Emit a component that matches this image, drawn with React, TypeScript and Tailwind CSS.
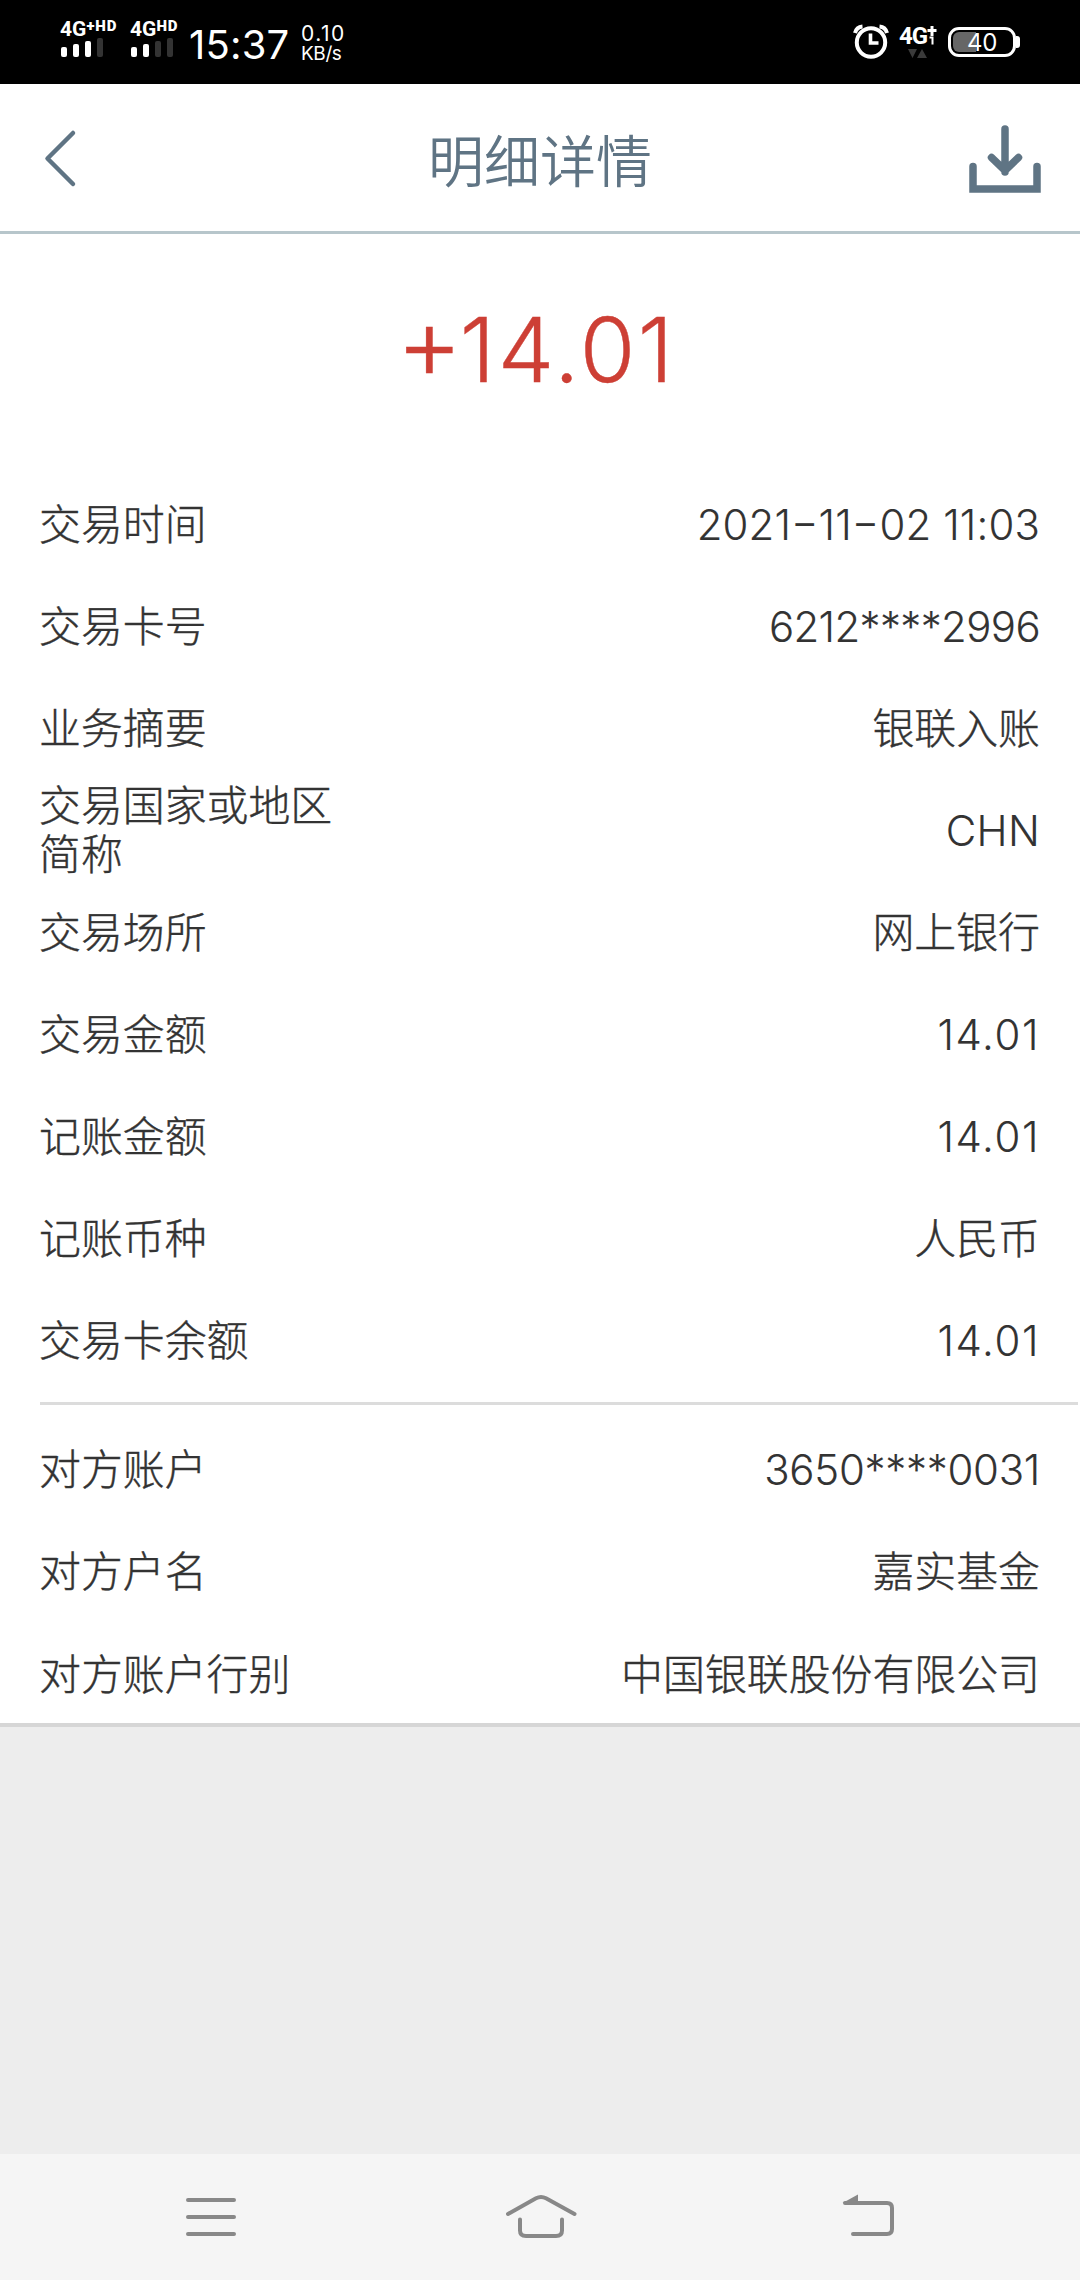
type Row = [string, string, string?];

const transaction: Row[] = [
  ['交易时间', '2021−11−02 11:03', 'tracking-[0.15px]'],
  ['交易卡号', '6212****2996', 'tracking-[-0.6px]'],
  ['业务摘要', '银联入账'],
  ['交易国家或地区简称', 'CHN', 'tracking-[0.3px]'],
  ['交易场所', '网上银行'],
  ['交易金额', '14.01', 'tracking-[1.6px]'],
  ['记账金额', '14.01', 'tracking-[1.6px]'],
  ['记账币种', '人民币'],
  ['交易卡余额', '14.01', 'tracking-[1.6px]'],
];

const counterparty: Row[] = [
  ['对方账户', '3650****0031', 'tracking-[-0.25px]'],
  ['对方户名', '嘉实基金'],
  ['对方账户行别', '中国银联股份有限公司'],
];

function Value({ text }: { text: string }) {
  return (
    <>
      {text.split(/(−)/).map((part, i) =>
        part === '−' ? (
          <span key={i} className="[font-feature-settings:'case']">
            {part}
          </span>
        ) : (
          part
        ),
      )}
    </>
  );
}

function Rows({ rows }: { rows: Row[] }) {
  return (
    <>
      {rows.map(([label, value, tracking]) => (
        <div
          key={label}
          className="flex h-[102.1px] items-center justify-between pr-[40px] pl-[39px] text-[41.9px] leading-[49px] font-light text-[#333] [-webkit-text-stroke:0.4px_#333]"
        >
          <span className="w-[300px]">{label}</span>
          <span className={`whitespace-nowrap ${tracking ? `${tracking} [-webkit-text-stroke:0.1px_#333]` : 'tracking-normal'}`}>
            <Value text={value} />
          </span>
        </div>
      ))}
    </>
  );
}

function Signal({ label, sup, on }: { label: string; sup: string; on: number }) {
  return (
    <div className="flex flex-col items-start">
      <div className="flex h-[17px] items-start font-['Roboto',sans-serif] font-bold whitespace-nowrap text-white">
        <span className="text-[21px] leading-[18px]">{label}</span>
        <span className="text-[15px] leading-[12px] font-black tracking-[0.9px]">{sup}</span>
      </div>
      <div className="ml-[1px] flex h-[20px] items-end gap-[6px]">
        {['h-[10px]', 'h-[13px]', 'h-[16px]', 'h-[19px]'].map((h, i) => (
          <span key={h} className={`w-[6px] rounded-[2px] ${h} ${i < on ? 'bg-white' : 'bg-[#333]'}`} />
        ))}
      </div>
    </div>
  );
}

function StatusBar() {
  return (
    <div className="flex h-[84px] shrink-0 items-start bg-black pl-[60px] text-white">
      <div className="mt-[20px] w-[70px]">
        <Signal label="4G" sup="+HD" on={3} />
      </div>
      <div className="mt-[20px] w-[59px]">
        <Signal label="4G" sup="HD" on={2} />
      </div>
      <div className="mt-[20px] w-[112px] text-[40px] leading-[49px] tracking-[0.2px] whitespace-nowrap">15:37</div>
      <div className="mt-[24px] text-[21px] leading-[19.5px]">
        <div className="tracking-[1.5px]">0.10</div>
        <div className="text-[19px] tracking-[-0.4px]">KB/s</div>
      </div>
      <div className="mt-[20px] mr-[60px] ml-auto flex">
        <svg width="36" height="40" viewBox="0 0 36 40" fill="none" stroke="#fff">
          <circle cx="18" cy="22.500" r="14.2" strokeWidth="4" />
          <path d="M17.500 13.500v9.500h8" strokeWidth="3.600" />
          <path d="M2 13Q3.500 7 9.500 6.500M34 13Q32.500 7 26.500 6.500" strokeWidth="4" />
        </svg>
        <div className="mt-[3px] ml-[10px] w-[49px]">
          <div className="flex h-[24px] font-['Roboto',sans-serif]">
            <span className="text-[24px] leading-[26px] font-bold tracking-[-1px]">4G</span>
            <svg width="10" height="24" viewBox="0 0 10 24" stroke="#fff" fill="none">
              <path d="M5 3v10M0.500 7.500h9" strokeWidth="3" />
              <path d="M2.500 14.500h3v7" strokeWidth="2" />
            </svg>
          </div>
          <svg className="ml-[9px]" width="20" height="12" viewBox="0 0 20 12" fill="#3a3a3a">
            <path d="M0 2h9L4.500 11zM9 11h10L14 2z" />
          </svg>
        </div>
        <div className="mt-[7px] flex h-[30px] items-center">
          <div className="flex h-[30px] w-[68px] items-center rounded-[11px] border-[3px] border-white p-[2px]">
            <div className="h-[20px] w-[23px] shrink-0 rounded-l-[6px] bg-[#666]" />
            <span className="mt-[1px] -ml-[9px] text-[24px] leading-[20px] tracking-[-0.3px]">40</span>
          </div>
          <div className="h-[12px] w-[4px] rounded-r-[3px] bg-white" />
        </div>
      </div>
    </div>
  );
}

function Header() {
  return (
    <div className="flex h-[150px] shrink-0 items-center justify-between border-b-[3px] border-[#b7c6cb] bg-white pr-[38px] pl-[44px] text-[#5f7484]">
      <svg className="mt-[2px]" width="68" height="60" viewBox="0 0 68 60" fill="none" stroke="currentColor" strokeWidth="4.500" strokeLinecap="round" strokeLinejoin="round">
        <path d="M29 4L3.500 29.500L29 55" />
      </svg>
      <h1 className="mt-[8px] text-[56px] [font-weight:350]">明细详情</h1>
      <svg className="mt-[1px]" width="74" height="72" viewBox="0 0 74 72" fill="none" stroke="currentColor" strokeWidth="7.500" strokeLinecap="round">
        <path d="M5 44.500v22.500h64V44.500" />
        <path d="M37 7v43M23.500 35.500L37 48.500L50.500 35.500" />
      </svg>
    </div>
  );
}

function NavBar() {
  return (
    <div className="flex h-[126px] shrink-0 items-start justify-between bg-[#f5f5f5] px-[186px] pt-[38px] text-[#888]">
      <svg width="50" height="50" viewBox="0 0 50 50" fill="none" stroke="currentColor" strokeWidth="4" strokeLinecap="round">
        <path d="M2 8h46M2 25h46M2 42h46" />
      </svg>
      <svg width="76" height="50" viewBox="0 0 76 50" fill="none" stroke="currentColor" strokeWidth="4" strokeLinecap="round">
        <path d="M7 22L35 6.200q5-2.600 10 0L73.500 22" />
        <path d="M19 27.500v11q0 5.500 6 5.500h30q6 0 6-5.500v-11" />
      </svg>
      <svg width="52" height="50" viewBox="0 0 52 50" fill="none" stroke="currentColor" strokeWidth="4" strokeLinecap="round">
        <path d="M3 11h42q5 0 5 5v21q0 5-5 5H11" />
        <path d="M0.500 11L16 2.500v8.500z" fill="currentColor" stroke="none" />
      </svg>
    </div>
  );
}

export default function App() {
  return (
    <div className="flex h-[2280px] w-[1080px] flex-col bg-[#ededed] font-['Inter','Noto_Sans_CJK_SC',sans-serif]">
      <StatusBar />
      <Header />
      <main className="h-[1493px] shrink-0 border-b-4 border-[#d6d6d6] bg-white">
        <div className="flex h-[239px] items-center justify-center pr-[8px] pb-[9px] text-[90px] font-light tracking-[2.6px] text-[#cd3f35] [font-feature-settings:'case'] [-webkit-text-stroke:0.4px_#cd3f35]">
          <span className="mt-[2px] -mr-[3px] text-[102px] leading-[90px] tracking-normal">+</span>
          <span>14.01</span>
        </div>
        <Rows rows={transaction} />
        <div className="mt-[10px] mr-[2px] mb-[14px] ml-[40px] h-[3px] bg-[#dcdcdc]" />
        <Rows rows={counterparty} />
      </main>
      <div className="flex-1" />
      <NavBar />
    </div>
  );
}
